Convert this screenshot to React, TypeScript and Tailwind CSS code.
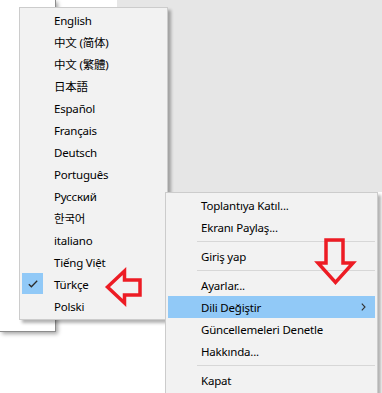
import React from "react";

const font = "font-['Noto_Sans','Noto_Sans_CJK_SC',sans-serif]";

type Lang = { label: string; cls?: string; checked?: boolean };

const langs: Lang[] = [
  { label: "English" },
  { label: "中文 (简体)", cls: "font-['Noto_Sans','Noto_Sans_CJK_SC',sans-serif]" },
  { label: "中文 (繁體)", cls: "font-['Noto_Sans','Noto_Sans_CJK_TC',sans-serif]" },
  { label: "日本語", cls: "font-['Noto_Sans_CJK_JP',sans-serif]" },
  { label: "Español" },
  { label: "Français" },
  { label: "Deutsch" },
  { label: "Português" },
  { label: "Русский" },
  { label: "한국어", cls: "font-['Noto_Sans_CJK_KR',sans-serif]" },
  { label: "italiano" },
  { label: "Tiếng Việt" },
  { label: "Türkçe", checked: true },
  { label: "Polski" },
];

type Item = { label?: string; sep?: boolean; active?: boolean; sub?: boolean };

const items: Item[] = [
  { label: "Toplantıya Katıl..." },
  { label: "Ekranı Paylaş..." },
  { sep: true },
  { label: "Giriş yap" },
  { sep: true },
  { label: "Ayarlar..." },
  { label: "Dili Değiştir", active: true, sub: true },
  { label: "Güncellemeleri Denetle" },
  { label: "Hakkında..." },
  { sep: true },
  { label: "Kapat" },
];

function Check() {
  return (
    <svg width="10" height="8" viewBox="0 0 10 8" className="absolute left-[6px] top-[7px]">
      <polyline points="0.8,4.2 3.4,6.8 9.2,0.8" fill="none" stroke="#2b2b2b" strokeWidth="1.3" />
    </svg>
  );
}

export default function App() {
  return (
    <div className={`relative w-[382px] h-[393px] overflow-hidden bg-white ${font} text-[11.5px] tracking-[-0.2px] text-black`}>
      {/* background app window */}
      <div className="absolute left-[117px] top-0 right-0 h-[192px] bg-[#e6e6e6]" />
      {/* left window */}
      <div className="absolute left-0 top-0 w-[56px] h-[332px] bg-white border-r border-b border-[#8c8c8c] shadow-[2px_2px_4px_rgba(0,0,0,0.35)]" />

      {/* language submenu */}
      <div className="absolute left-[19px] top-[7px] w-[149px] flex flex-col bg-[#f2f2f2] border border-[#cccccc] px-[2px] pt-[1px] pb-[2px] shadow-[3px_3px_3px_rgba(0,0,0,0.3)]">
        {langs.map((l) => (
          <div key={l.label} className="relative h-[22px] flex items-center pl-[32px] pt-[2px] leading-none">
            {l.checked && (
              <div className="absolute left-0 top-0 w-[21px] h-[21px] bg-[#91c9f7]">
                <Check />
              </div>
            )}
            <span className={l.cls}>{l.label}</span>
          </div>
        ))}
      </div>

      {/* main context menu */}
      <div className="absolute left-[165px] top-[192px] w-[213px] h-[210px] flex flex-col bg-[#f2f2f2] border border-[#cccccc] px-[2px] pt-[1px] shadow-[3px_3px_3px_rgba(0,0,0,0.3)]">
        {items.map((it, i) =>
          it.sep ? (
            <div key={i} className="h-[7px] flex items-center pl-[29px]">
              <div className="h-px w-full bg-[#d7d7d7]" />
            </div>
          ) : (
            <div
              key={i}
              className={`relative h-[22px] flex items-center pl-[33px] pt-[2px] leading-none ${it.active ? "bg-[#91c9f7]" : ""}`}
            >
              <span>{it.label}</span>
              {it.sub && (
                <svg width="5" height="8" viewBox="0 0 5 8" className="absolute right-[9px] top-[7px]">
                  <polyline points="0.8,0.6 4,4 0.8,7.4" fill="none" stroke="#333" strokeWidth="1.1" />
                </svg>
              )}
            </div>
          )
        )}
      </div>

      {/* red annotation arrows */}
      <svg className="absolute left-0 top-0 pointer-events-none" width="382" height="393" viewBox="0 0 382 393">
        <polygon
          points="107.5,287 124.5,271 124.5,280 140,280 140,295 124.5,295 124.5,303"
          fill="none"
          stroke="#ed1c24"
          strokeWidth="3.5"
          strokeLinejoin="miter"
        />
        <polygon
          points="326,240 343,240 343,263 353,263 335.5,282.5 318,263 326,263"
          fill="none"
          stroke="#ed1c24"
          strokeWidth="3.5"
          strokeLinejoin="miter"
        />
      </svg>
    </div>
  );
}
